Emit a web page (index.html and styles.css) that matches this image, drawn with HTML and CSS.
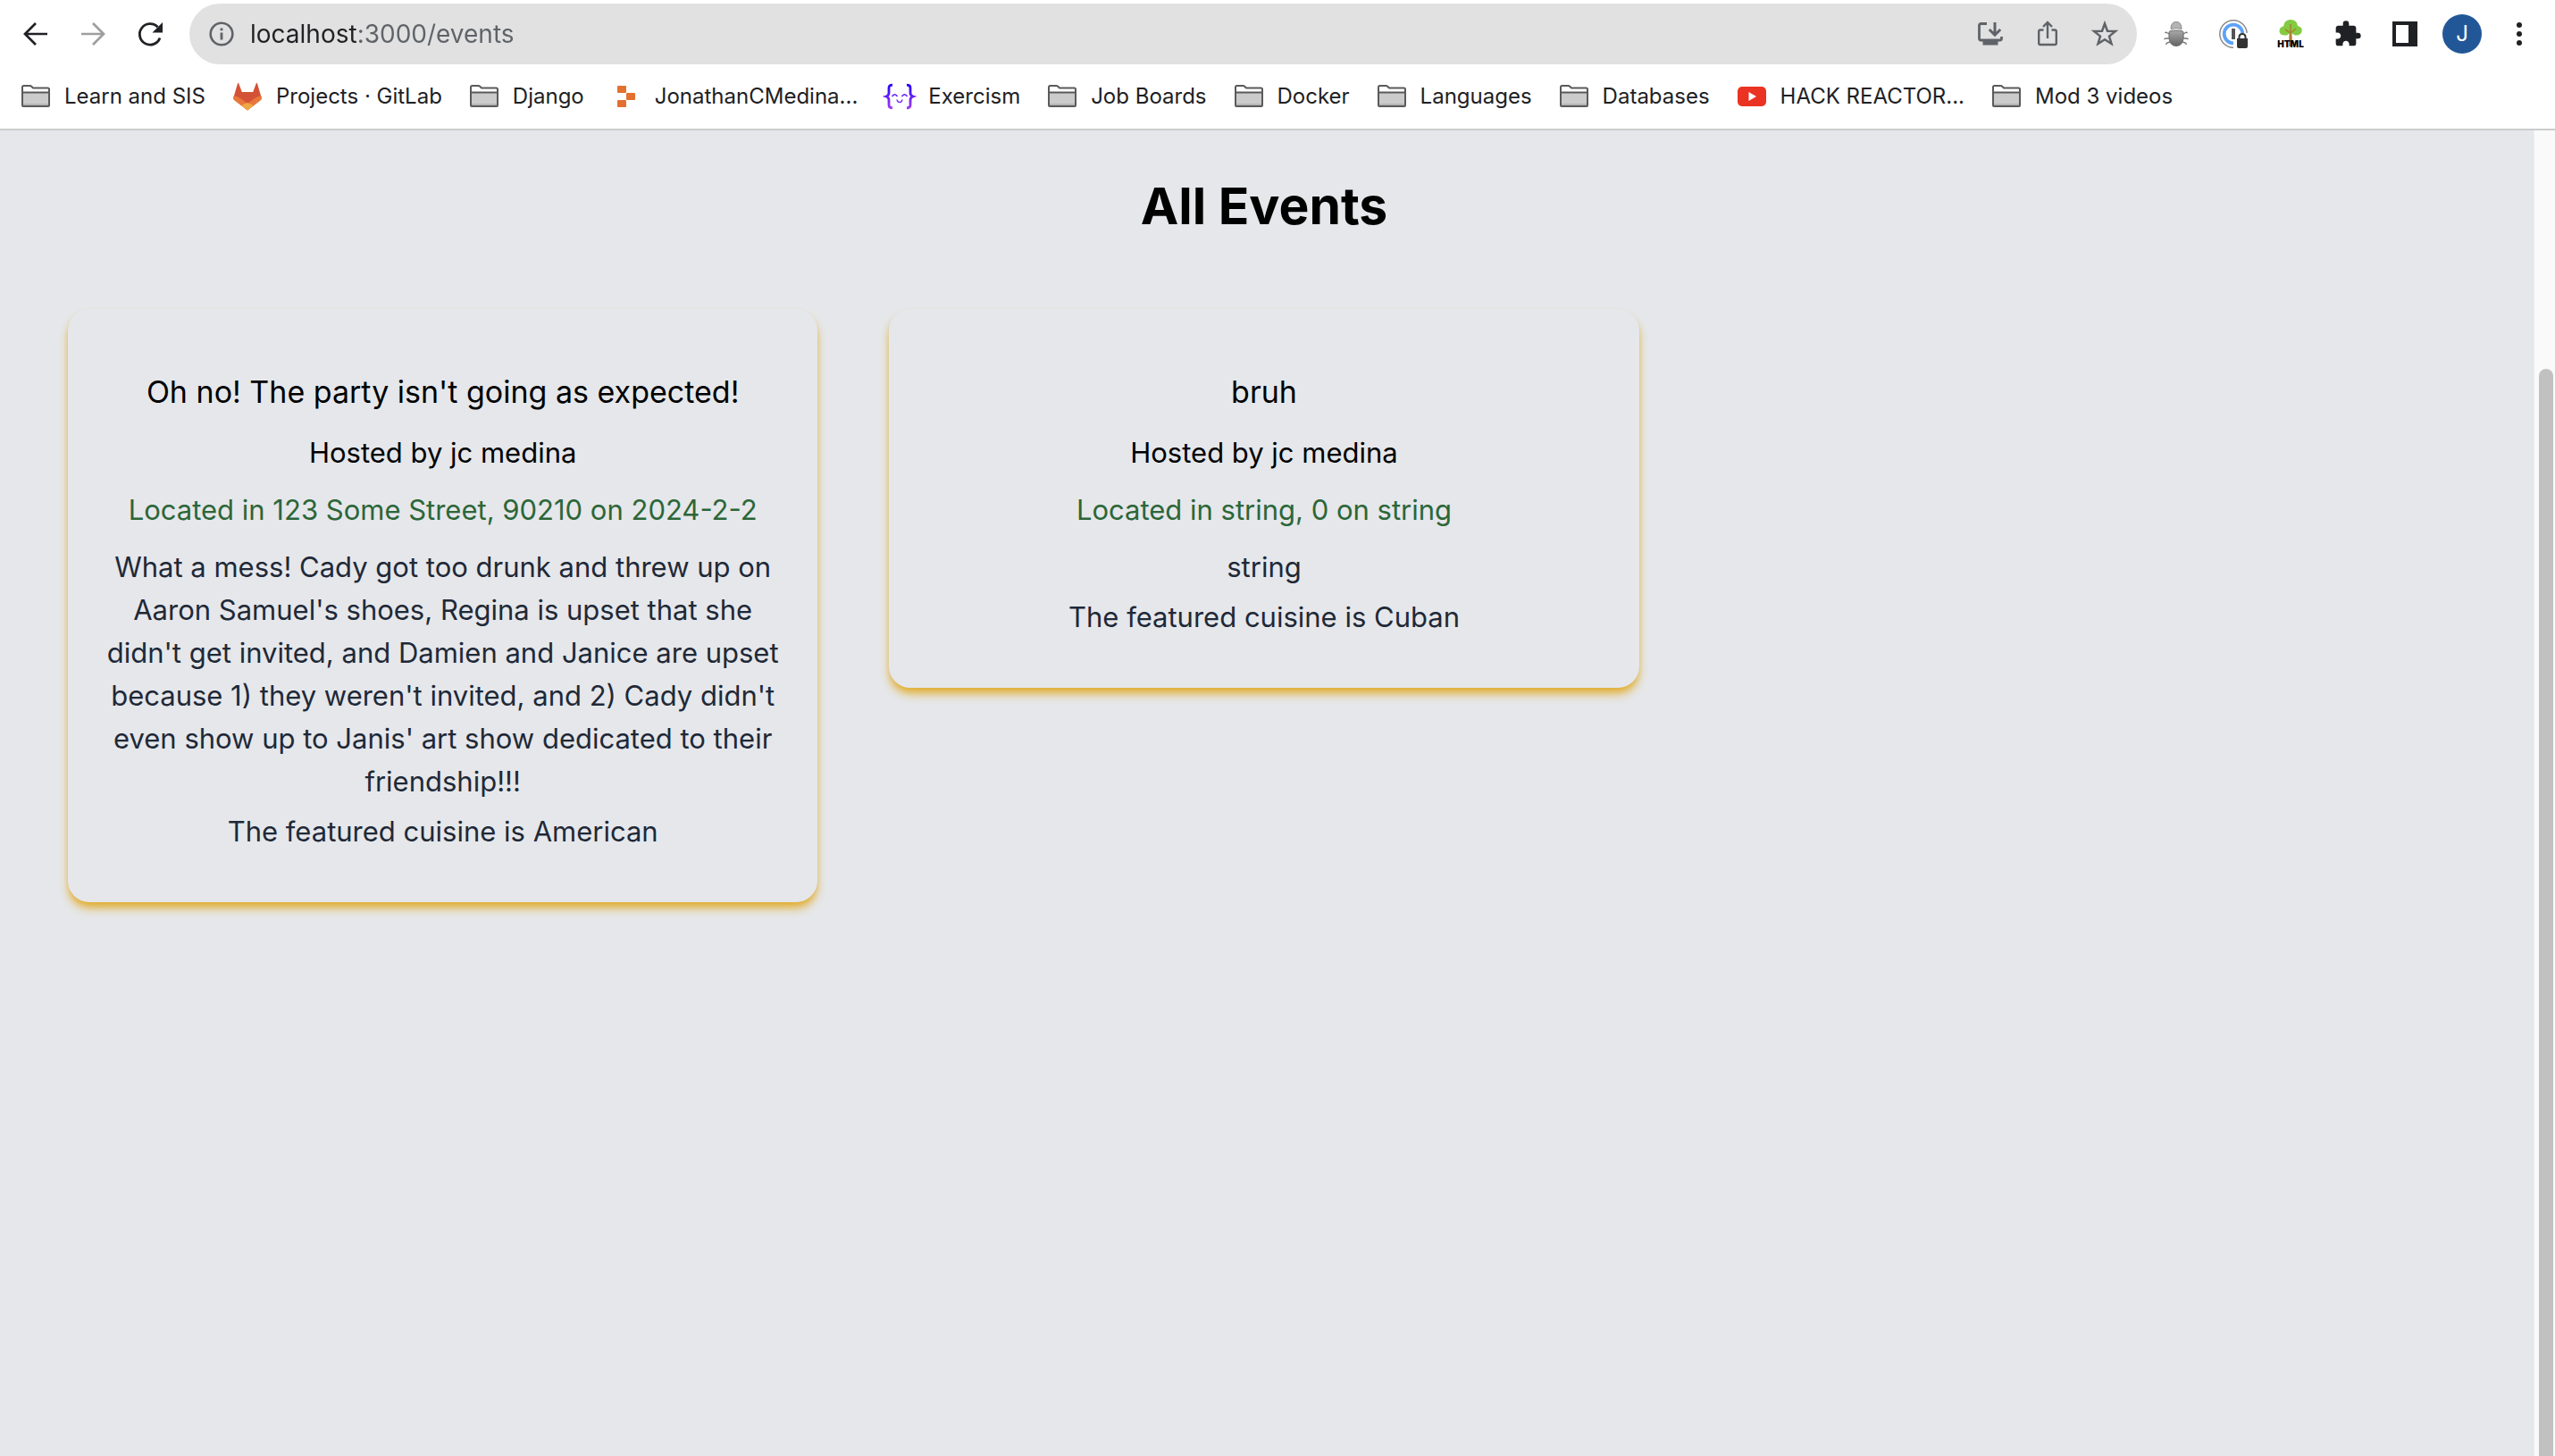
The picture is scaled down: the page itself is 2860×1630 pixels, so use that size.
FILE: index.html
```
<!DOCTYPE html>
<html lang="en">
<head>
<meta charset="utf-8">
<title>All Events</title>
<link rel="stylesheet" href="styles.css">
</head>
<body>
<svg class="sprite" aria-hidden="true">
  <symbol id="folder" viewBox="0 0 32 32">
    <path d="M1 26V5.500Q1 4 2.500 4H9.500Q10.500 4 11.200 4.700L13 6.500H29.500Q31 6.500 31 8V26Q31 27 30 27H2Q1 27 1 26Z" fill="#fff"/>
    <path d="M1 11.500H31V27H1Z" fill="#cbcbcb"/>
    <path d="M1 24H31V27H1Z" fill="#b5b5b5"/>
    <path d="M1 26V5.500Q1 4 2.500 4H9.500Q10.500 4 11.200 4.700L13 6.500H29.500Q31 6.500 31 8V26Q31 27 30 27H2Q1 27 1 26ZM1 11.500H31" fill="none" stroke="#5a5a5a" stroke-width="2"/>
  </symbol>
</svg>

<header class="browser">
  <div class="toolbar">
    <nav class="tools" aria-label="History">
      <button class="tool" type="button" aria-label="Back"><svg class="icon" viewBox="0 0 32 32"><path d="M29 16H4M16 4 4 16 16 28" fill="none" stroke="#202124" stroke-width="2.700"/></svg></button>
      <button class="tool" type="button" aria-label="Forward"><svg class="icon" viewBox="0 0 32 32"><path d="M3 16H28M16 4 28 16 16 28" fill="none" stroke="#9e9e9e" stroke-width="2.700"/></svg></button>
      <button class="tool" type="button" aria-label="Reload"><svg class="icon" viewBox="0 0 32 32"><path d="M27 20.500A11.700 11.700 0 1 1 24.500 8.300" fill="none" stroke="#202124" stroke-width="2.800"/><path d="M30 3V14.500H18.500Z" fill="#202124"/></svg></button>
    </nav>
    <form class="omnibox">
      <button class="info" type="button" aria-label="View site information"><svg class="icon" viewBox="0 0 32 32"><circle cx="16" cy="16" r="12.300" fill="none" stroke="#5f6368" stroke-width="2.600"/><path d="M14.600 9.500h2.800v2.800h-2.800zM14.600 14.600h2.800v8h-2.800z" fill="#5f6368"/></svg></button>
      <input class="address" type="text" value="localhost:3000/events" aria-label="Address">
      <button class="tool" type="button" aria-label="Install app"><svg class="icon" viewBox="0 0 32 32"><path d="M12 4.500H5.500Q3.500 4.500 3.500 6.500V21Q3.500 23 5.500 23H26.500Q28.500 23 28.500 21V19" fill="none" stroke="#5f6368" stroke-width="2.800"/><path d="M7.500 23H24.500V28.500H7.500Z" fill="#5f6368"/><path d="M21 3V17M14.800 11 21 17.200 27.200 11" fill="none" stroke="#5f6368" stroke-width="3"/></svg></button>
      <button class="tool" type="button" aria-label="Share"><svg class="icon" viewBox="0 0 32 32"><path d="M11.500 11.500H8Q6.200 11.500 6.200 13.300V26.200Q6.200 28 8 28H24Q25.800 28 25.800 26.200V13.300Q25.800 11.500 24 11.500H20.500M16 21V3M11 8 16 3 21 8" fill="none" stroke="#5f6368" stroke-width="2.400"/></svg></button>
      <button class="tool" type="button" aria-label="Bookmark this tab"><svg class="icon" viewBox="0 0 32 32"><path d="M16 4.500 19 12.700 28 13 21 18.600 23.500 27 16 22.200 8.500 27 11 18.600 4 13 13 12.700Z" fill="none" stroke="#5f6368" stroke-width="2.500"/></svg></button>
    </form>
    <div class="tools">
      <button class="tool" type="button" aria-label="Bug extension"><svg class="icon" viewBox="0 0 32 32"><defs><linearGradient id="bug" x1="0" y1="0" x2="0" y2="1"><stop offset="0" stop-color="#a9a9a9"/><stop offset="1" stop-color="#636363"/></linearGradient></defs><path d="M10 10.500Q10 2.500 16 2.500T22 10.500Q16 8.500 10 10.500Z" fill="#b4b4b4" stroke="#8a8a8a"/><path d="M8 14Q8 12 16 12T24 14Q25.500 29.500 16 29.500T8 14Z" fill="url(#bug)" stroke="#6b6b6b"/><path d="M8 16 4.500 14 3.500 15M8 21H4L2.500 22M9 25 5.500 26 4.500 28M24 16 27.500 14 28.500 15M24 21H28L29.500 22M23 25 26.500 26 27.500 28" fill="none" stroke="#777" stroke-width="1.400"/></svg></button>
      <button class="tool" type="button" aria-label="Password manager, locked"><svg class="icon" viewBox="0 0 32 32"><circle cx="16" cy="16" r="15.200" fill="#fff" stroke="#8b8b8b" stroke-width="1.500"/><circle cx="16" cy="16" r="10.300" fill="none" stroke="#5da2f8" stroke-width="3.800"/><path d="M16 32V22L20 15H32V32Z" fill="#fff"/><path d="M20 21h12v9q0 2-2 2H22q-2 0-2-2z" fill="#333"/><path d="M22.500 22v-2.500q0-3.500 3.500-3.500t3.500 3.500V22" fill="none" stroke="#333" stroke-width="2"/><path d="M14 10h4v12h-4z" fill="#555"/></svg></button>
      <button class="tool" type="button" aria-label="HTML tree extension"><svg class="icon" viewBox="0 0 32 32"><path d="M14 30 14.800 10h2.400L18 30Z" fill="#b9772f"/><path d="M9 17.500Q3 17 3.500 12 4 8 8 7.500 9 0 16 0T24 7Q29 8 28.700 12.500 28 18 21 17.500L17.500 15.500H14.500L12 17.500Z" fill="#83cb42"/><path d="M16 5V18M15 14.500 10 11M17 14.500 22 10" fill="none" stroke="#a9852f" stroke-width="1.600"/><text class="tree-label" x="16" y="31" text-anchor="middle">HTML</text></svg></button>
      <button class="tool" type="button" aria-label="Extensions"><svg class="icon" viewBox="0 0 24 24"><path d="M20.500 11H19V7c0-1.100-.9-2-2-2h-4V3.500a2.500 2.500 0 0 0-5 0V5H4c-1.100 0-1.990.9-1.990 2v3.800H3.500c1.490 0 2.700 1.210 2.700 2.700s-1.210 2.700-2.700 2.700H2V20c0 1.100.9 2 2 2h3.800v-1.500c0-1.490 1.210-2.700 2.700-2.700s2.700 1.210 2.700 2.700V22H17c1.100 0 2-.9 2-2v-4h1.500a2.500 2.500 0 0 0 0-5z" fill="#202124"/></svg></button>
      <button class="tool" type="button" aria-label="Side panel"><svg class="icon" viewBox="0 0 32 32"><path d="M2 2H30V30H2ZM6 6V26H20V6Z" fill="#202124" fill-rule="evenodd"/></svg></button>
      <button class="tool" type="button" aria-label="Profile"><span class="avatar">J</span></button>
      <button class="tool" type="button" aria-label="Menu"><svg class="icon" viewBox="0 0 32 32"><g fill="#202124"><circle cx="16" cy="6" r="3"/><circle cx="16" cy="16" r="3"/><circle cx="16" cy="26" r="3"/></g></svg></button>
    </div>
  </div>

  <nav class="bookmarks" aria-label="Bookmarks">
    <a class="bookmark" href="#"><svg class="icon"><use href="#folder"/></svg>Learn and SIS</a>
    <a class="bookmark" href="#"><svg class="icon" viewBox="0 0 32 32"><path d="M16 31.500 1.200 20Q0 19 .3 17.500L5 1.500Q5.600 0 6.300 1.500L9.800 11H22.200L25.700 1.500Q26.400 0 27 1.500L31.700 17.500Q32 19 30.800 20Z" fill="#d35237"/><path d="M.4 15.500Q4 15 10 19.500L16 24 22 19.500Q28 15 31.600 15.500L31.800 18Q31.800 19.200 30.800 20L16 31.500 1.200 20Q.2 19.200.2 18Z" fill="#e9773b"/><path d="M16 23 23 26 16 31.500 9 26Z" fill="#eea843"/></svg>Projects · GitLab</a>
    <a class="bookmark" href="#"><svg class="icon"><use href="#folder"/></svg>Django</a>
    <a class="bookmark" href="#"><svg class="icon" viewBox="0 0 32 32"><g fill="#e3702f"><rect x="6" y="4" width="10" height="8" rx="1"/><rect x="16" y="12" width="10" height="8" rx="1"/><rect x="6" y="20" width="10" height="8" rx="1"/></g></svg>JonathanCMedina...</a>
    <a class="bookmark" href="#"><svg class="icon" viewBox="0 0 32 32"><defs><linearGradient id="brace" gradientUnits="userSpaceOnUse" x1="0" y1="2" x2="0" y2="30"><stop offset="0" stop-color="#2300ff"/><stop offset="1" stop-color="#a23df0"/></linearGradient></defs><g fill="none" stroke="url(#brace)"><path d="M8 3.200Q4 3.200 4 6.500V12Q4 15 1 16 4 17 4 20V25.500Q4 28.800 8 28.800M24 3.200Q28 3.200 28 6.500V12Q28 15 31 16 28 17 28 20V25.500Q28 28.800 24 28.800" stroke-width="2.800"/><path d="M7.500 16Q10.500 11.500 13.500 16M18.500 16Q21.500 11.500 24.500 16M13 19.500Q13.500 22.500 16 22.500T19 19.500" stroke-width="1.500"/></g></svg>Exercism</a>
    <a class="bookmark" href="#"><svg class="icon"><use href="#folder"/></svg>Job Boards</a>
    <a class="bookmark" href="#"><svg class="icon"><use href="#folder"/></svg>Docker</a>
    <a class="bookmark" href="#"><svg class="icon"><use href="#folder"/></svg>Languages</a>
    <a class="bookmark" href="#"><svg class="icon"><use href="#folder"/></svg>Databases</a>
    <a class="bookmark" href="#"><svg class="icon" viewBox="0 0 32 32"><rect y="5" width="32" height="22" rx="5" fill="#ea3323"/><path d="M12.500 11 21 16 12.500 21Z" fill="#fff"/></svg>HACK REACTOR...</a>
    <a class="bookmark" href="#"><svg class="icon"><use href="#folder"/></svg>Mod 3 videos</a>
  </nav>
</header>

<div class="viewport">
  <main class="page">
    <h1 class="page-title">All Events</h1>
    <div class="events">
      <article class="card">
        <h2 class="card-title">Oh no! The party isn't going as expected!</h2>
        <p class="host">Hosted by jc medina</p>
        <p class="place">Located in 123 Some Street, 90210 on 2024-2-2</p>
        <div class="details">
          <p>What a mess! Cady got too drunk and threw up on Aaron Samuel's shoes, Regina is upset that she didn't get invited, and Damien and Janice are upset because 1) they weren't invited, and 2) Cady didn't even show up to Janis' art show dedicated to their friendship!!!</p>
          <p>The featured cuisine is American</p>
        </div>
      </article>
      <article class="card">
        <h2 class="card-title">bruh</h2>
        <p class="host">Hosted by jc medina</p>
        <p class="place">Located in string, 0 on string</p>
        <div class="details">
          <p>string</p>
          <p>The featured cuisine is Cuban</p>
        </div>
      </article>
    </div>
  </main>
  <div class="scrollbar"><div class="thumb"></div></div>
</div>
</body>
</html>
```
FILE: styles.css
```
* { box-sizing: border-box; }

body {
  margin: 0;
  min-height: 100vh;
  display: flex;
  flex-direction: column;
  background: #e5e7eb;
  color: #000;
  font-family: Inter, "Liberation Sans", sans-serif;
}

h1, h2, p { margin: 0; }

button {
  padding: 0;
  border: 0;
  background: none;
  font: inherit;
}

.sprite { display: none; }

.icon {
  display: block;
  flex: none;
  width: 32px;
  height: 32px;
  overflow: visible;
}

/* Browser chrome */
.browser {
  background: #fff;
  border-bottom: 2px solid #cbcccd;
}

.toolbar {
  display: flex;
  align-items: center;
  gap: 12px;
  padding: 4px 8px;
}

.tools { display: flex; }

.tool {
  display: flex;
  align-items: center;
  justify-content: center;
  width: 64px;
  height: 68px;
}

.omnibox {
  flex: 1;
  display: flex;
  align-items: center;
  height: 68px;
  padding: 0 4px 0 20px;
  border-radius: 34px;
  background: #e1e1e1;
}

.address {
  flex: 1;
  min-width: 0;
  height: 40px;
  margin-left: 16px;
  padding: 0;
  border: 0;
  outline: 0;
  font: 28px/40px Inter, "Liberation Sans", sans-serif;
  /* host in dark, port and path in grey */
  color: transparent;
  background: linear-gradient(to right, #202124 120px, #5f6368 120px);
  -webkit-background-clip: text;
  background-clip: text;
}

.tree-label {
  font: 900 10px Inter, "Liberation Sans", sans-serif;
}

.avatar {
  width: 44px;
  height: 44px;
  border-radius: 50%;
  background: #225797;
  color: #fff;
  font-size: 24px;
  line-height: 44px;
  text-align: center;
}

.bookmarks {
  display: flex;
  align-items: center;
  gap: 31px;
  height: 68px;
  padding: 0 24px 4px;
}

.bookmark {
  display: flex;
  align-items: center;
  gap: 16px;
  color: #202124;
  font-size: 24px;
  line-height: 32px;
  text-decoration: none;
  white-space: nowrap;
}

/* Page */
.viewport {
  flex: 1;
  display: flex;
}

.page {
  flex: 1;
  padding: 49px 82px 48px 76px;
  text-align: center;
}

.page-title {
  font-size: 57px;
  line-height: 72px;
  font-weight: 700;
}

.events {
  display: grid;
  grid-template-columns: repeat(3, 1fr);
  align-items: start;
  gap: 80px;
  margin-top: 79px;
}

.card {
  display: flex;
  flex-direction: column;
  gap: 16px;
  padding: 65px 40px 55px;
  border-radius: 24px;
  background: #e5e7eb;
  box-shadow: 0 8px 12px -2px #e2ae30, 0 4px 8px -4px #e2ae30;
  font-size: 31px;
  line-height: 48px;
}

.card-title {
  font-size: 34px;
  line-height: 56px;
  font-weight: 400;
}

.place { color: #2c6638; }

.details {
  display: flex;
  flex-direction: column;
  gap: 8px;
  color: #1f2937;
}

.scrollbar {
  display: flex;
  width: 24px;
  padding: 267px 2px 0 5px;
  border-left: 1px solid #ededed;
  background: #fafafa;
}

.thumb {
  flex: 1;
  border-radius: 8px 8px 0 0;
  background: #c1c1c1;
}
```
